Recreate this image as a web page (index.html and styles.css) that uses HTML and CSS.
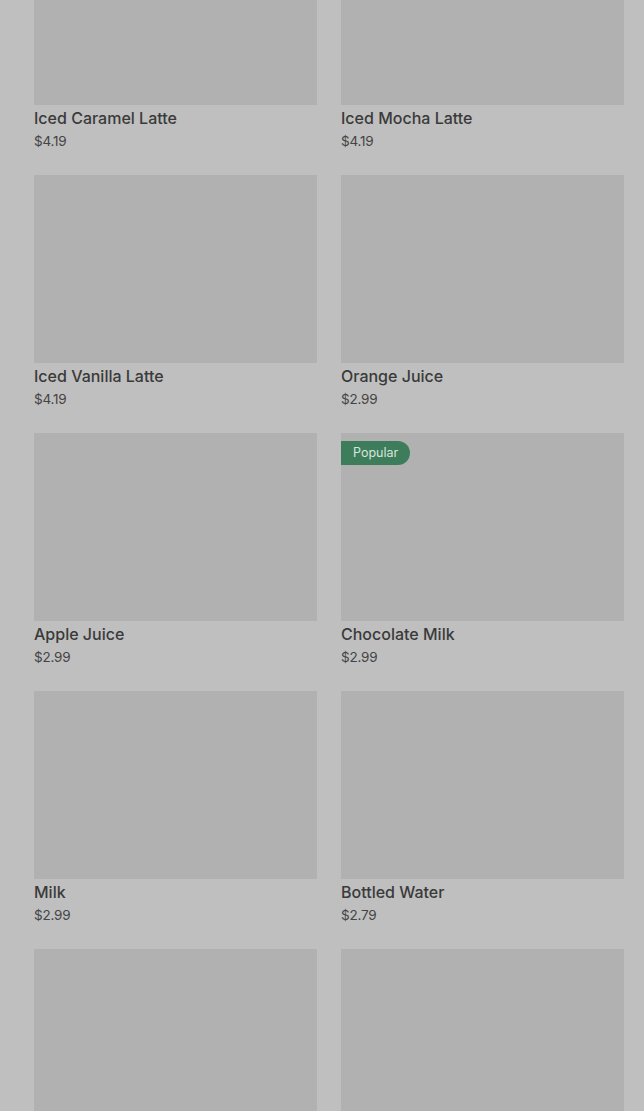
FILE: index.html
```html
<!DOCTYPE html>
<html lang="en">
<head>
    <meta charset="UTF-8">
    <meta name="viewport" content="width=device-width, initial-scale=1.0">
    <title>Drinks</title>
    <link rel="stylesheet" href="styles.css">
</head>
<body>
    <div class="menu-grid">
        <div class="item-card">
            <div class="item-image"></div>
            <div class="item-name">Iced Caramel Latte</div>
            <div class="item-price">$4.19</div>
        </div>
        <div class="item-card">
            <div class="item-image"></div>
            <div class="item-name">Iced Mocha Latte</div>
            <div class="item-price">$4.19</div>
        </div>
        <div class="item-card">
            <div class="item-image"></div>
            <div class="item-name">Iced Vanilla Latte</div>
            <div class="item-price">$4.19</div>
        </div>
        <div class="item-card">
            <div class="item-image"></div>
            <div class="item-name">Orange Juice</div>
            <div class="item-price">$2.99</div>
        </div>
        <div class="item-card">
            <div class="item-image"></div>
            <div class="item-name">Apple Juice</div>
            <div class="item-price">$2.99</div>
        </div>
        <div class="item-card">
            <div class="item-image">
                <span class="badge">Popular</span>
            </div>
            <div class="item-name">Chocolate Milk</div>
            <div class="item-price">$2.99</div>
        </div>
        <div class="item-card">
            <div class="item-image"></div>
            <div class="item-name">Milk</div>
            <div class="item-price">$2.99</div>
        </div>
        <div class="item-card">
            <div class="item-image"></div>
            <div class="item-name">Bottled Water</div>
            <div class="item-price">$2.79</div>
        </div>
        <div class="item-card">
            <div class="item-image"></div>
        </div>
        <div class="item-card">
            <div class="item-image"></div>
        </div>
    </div>
</body>
</html>
```

FILE: styles.css
```css
* {
    margin: 0;
    padding: 0;
    box-sizing: border-box;
    font-family: Inter, "Noto Sans", sans-serif;
}

body {
    background-color: #bfbfbf;
    min-height: 100vh;
    overflow: hidden;
}

.menu-grid {
    display: grid;
    grid-template-columns: 283px 283px;
    column-gap: 24px;
    row-gap: 24px;
    padding: 0 20px 0 34px;
    margin-top: -83px;
}

.item-card {
    display: flex;
    flex-direction: column;
    min-height: 234px;
}

.item-image {
    position: relative;
    height: 188px;
    background-color: #b1b1b1;
}

.badge {
    position: absolute;
    top: 8px;
    left: 0;
    height: 24px;
    line-height: 24px;
    padding: 0 12px;
    border-radius: 0 12px 12px 0;
    background-color: #3e7d5c;
    color: #d6e6dc;
    font-size: 12.5px;
}

.item-name {
    margin-top: 2px;
    font-size: 16px;
    line-height: 22px;
    font-weight: 500;
    color: #3a3a3a;
}

.item-price {
    margin-top: 2px;
    font-size: 13.5px;
    line-height: 20px;
    color: #444;
    letter-spacing: -0.2px;
}
```
